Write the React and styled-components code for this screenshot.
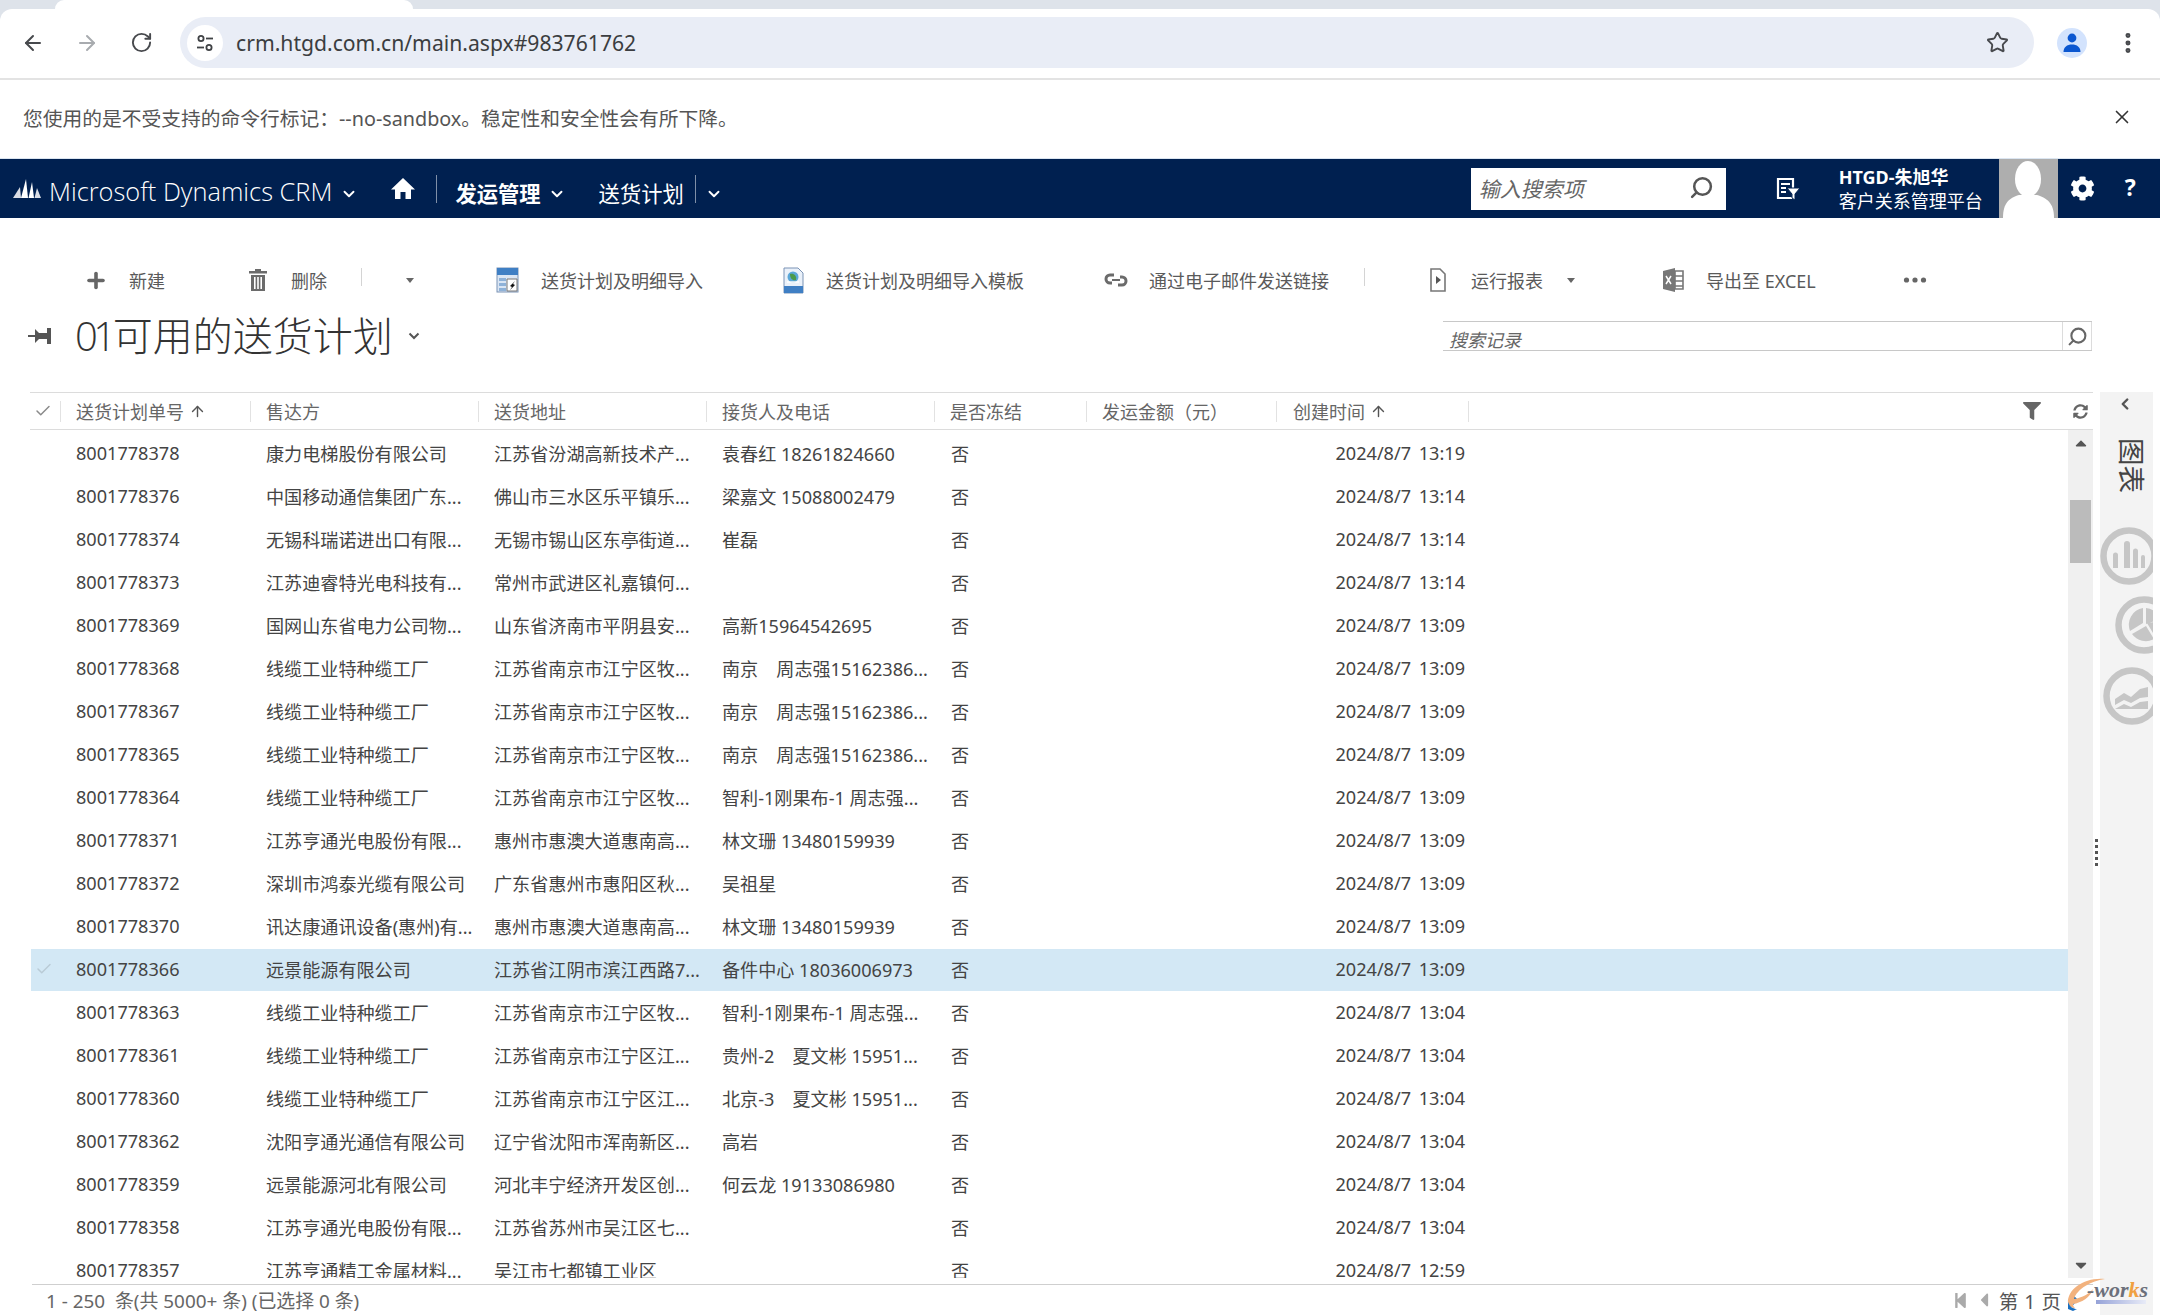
import React from 'react';
import styled, { createGlobalStyle } from 'styled-components';
import { ArrowLeft, ArrowRight, RotateCw, Star, X, EllipsisVertical, ChevronDown, ChevronLeft, ArrowUp, Check, Search, Plus } from 'lucide-react';
import { FaCog, FaFilter, FaSyncAlt, FaStepBackward, FaCaretLeft, FaCaretUp, FaCaretDown, FaCaretRight } from 'react-icons/fa';

const SANS = `"Noto Sans", "Noto Sans CJK SC", sans-serif`;

const Global = createGlobalStyle`
  html, body { margin: 0; padding: 0; background: #fff; }
  body { font-family: ${SANS}; color: #444; }
  * { box-sizing: border-box; }
`;

const Page = styled.div`
  width: 2160px;
  height: 1315px;
  overflow: hidden;
  display: flex;
  flex-direction: column;
  background: #fff;
`;

const BrowserFrame = styled.div`
  background: #dee3ea;
  flex: none;
`;
const TabStrip = styled.div`
  height: 9px;
  display: flex;
`;
const ActiveTab = styled.div`
  width: 358px;
  margin-left: 55px;
  background: #fff;
  border-radius: 10px 10px 0 0;
`;
const Toolbar = styled.div`
  height: 71px;
  background: #fff;
  border-radius: 12px 12px 0 0;
  border-bottom: 2px solid #e3e3e3;
  display: flex;
  align-items: center;
  padding-bottom: 2px;
  color: #47494d;
`;
const ToolButton = styled.div`
  width: 28px;
  display: flex;
  justify-content: center;
  margin-left: ${p => p.$ml || 0}px;
  color: ${p => p.$color || '#47494d'};
`;
const AddressBar = styled.div`
  width: 1854px;
  height: 51px;
  margin-left: 25px;
  border-radius: 26px;
  background: #e9edf6;
  display: flex;
  align-items: center;
  padding: 0 25px 0 7px;
`;
const SiteBadge = styled.div`
  width: 36px;
  height: 36px;
  border-radius: 50%;
  background: #fff;
  display: flex;
  align-items: center;
  justify-content: center;
`;
const UrlText = styled.div`
  flex: 1;
  margin-left: 13px;
  font-size: 21.15px;
  color: #3b3d40;
`;
const ProfileBadge = styled.div`
  width: 30px;
  height: 30px;
  margin-left: 23px;
  border-radius: 50%;
  background: #d3e3fd;
  display: flex;
  align-items: center;
  justify-content: center;
`;

const InfoBar = styled.div`
  height: 79px;
  flex: none;
  border-bottom: 1px solid #dbe5f0;
  display: flex;
  align-items: center;
  justify-content: space-between;
  padding: 0 27px 4px 23px;
  font-size: 19.75px;
  color: #555;
`;

const NavBar = styled.div`
  height: 59px;
  flex: none;
  background: #002050;
  color: #fff;
  display: flex;
  align-items: center;
`;
const Brand = styled.div`
  margin-left: 8px;
  padding-top: 5px;
  font-size: 25.4px;
  font-weight: 300;
  font-family: "Open Sans", ${SANS};
  white-space: nowrap;
`;
const NavChevron = styled(ChevronDown)`
  margin-left: ${p => p.$ml || 0}px;
  margin-top: 10px;
  flex: none;
`;
const NavDivider = styled.div`
  width: 1px;
  height: 28px;
  background: #7f8fa8;
  margin-left: ${p => p.$ml || 0}px;
`;
const NavLabel = styled.div`
  margin-left: ${p => p.$ml || 0}px;
  font-size: 21.3px;
  font-weight: ${p => (p.$bold ? 700 : 400)};
  padding-top: 7px;
  white-space: nowrap;
`;
const HelpMark = styled.div`
  margin-left: 30px;
  font-size: 23px;
  font-weight: 700;
  padding-bottom: 4px;
`;
const NavIconSlot = styled.div`
  margin-left: ${p => p.$ml || 0}px;
  display: flex;
  flex: none;
`;
const GlobalSearch = styled.div`
  width: 255px;
  height: 42px;
  margin-left: 748px;
  background: #fff;
  display: flex;
  align-items: center;
  justify-content: space-between;
  padding: 0 12px 2px 8px;
  font-size: 21px;
  font-style: italic;
  color: #666;
`;
const UserBlock = styled.div`
  margin-left: 38px;
  width: 160px;
  display: flex;
  flex-direction: column;
  line-height: 24px;
`;
const UserName = styled.div`
  font-size: 18px;
  font-weight: 700;
`;
const UserOrg = styled.div`
  font-size: 18px;
`;
const Avatar = styled.div`
  width: 59px;
  height: 59px;
  background: #aeaeae;
  flex: none;
  display: flex;
  overflow: hidden;
`;

const CommandBar = styled.div`
  height: 44px;
  margin-top: 40px;
  flex: none;
  display: flex;
  align-items: center;
  color: #5a5a5a;
  font-size: 18px;
  padding-left: 84px;
`;
const Command = styled.div`
  display: flex;
  align-items: center;
  gap: ${p => p.$gap ?? 21}px;
  margin-left: ${p => p.$ml || 0}px;
  white-space: nowrap;
`;
const CommandIcon = styled.div`
  width: 24px;
  height: 24px;
  display: flex;
  align-items: center;
  justify-content: center;
  flex: none;
`;
const CommandDivider = styled.div`
  width: 1px;
  height: 18px;
  background: #d4d4d4;
  margin-left: ${p => p.$ml || 0}px;
  margin-top: -6px;
`;
const Caret = styled.div`
  width: 0;
  height: 0;
  border-left: 4px solid transparent;
  border-right: 4px solid transparent;
  border-top: 5px solid #666;
  margin-left: ${p => p.$ml || 0}px;
`;

const TitleRow = styled.div`
  height: 36px;
  margin-top: 16px;
  flex: none;
  display: flex;
  align-items: center;
  padding: 0 68px 0 28px;
`;
const ViewTitle = styled.div`
  margin-left: 21px;
  font-size: 40px;
  color: #333;
  white-space: nowrap;
  line-height: 36px;
  font-weight: 300;
`;
const TitleDigits = styled.span`
  font-family: "Open Sans", ${SANS};
  letter-spacing: -4.5px;
  margin-right: 1px;
`;
const QuickSearch = styled.div`
  width: 649px;
  height: 30px;
  margin-left: auto;
  display: flex;
  border-top: 1px solid #c8c8c8;
  border-bottom: 1px solid #c8c8c8;
`;
const QuickInput = styled.div`
  flex: 1;
  padding: 5px 0 0 6px;
  font-size: 18px;
  line-height: 26px;
  font-style: italic;
  color: #666;
`;
const QuickButton = styled.div`
  width: 30px;
  border-left: 1px solid #dcdcdc;
  border-right: 1px solid #dcdcdc;
  display: flex;
  align-items: center;
  justify-content: center;
`;

const Content = styled.div`
  flex: 1;
  margin-top: 38px;
  min-height: 0;
  display: flex;
`;
const GridArea = styled.div`
  width: 2063px;
  margin-left: 30px;
  display: flex;
  flex-direction: column;
  position: relative;
`;
const HeaderRow = styled.div`
  height: 38px;
  flex: none;
  display: flex;
  align-items: center;
  border-top: 1px solid #dcdcdc;
  border-bottom: 1px solid #dcdcdc;
`;
const CheckCell = styled.div`
  width: 30px;
  flex: none;
  display: flex;
  justify-content: center;
  padding-right: 4px;
  color: ${p => p.$color || '#8a8a8a'};
`;
const HeaderCell = styled.div`
  width: ${p => p.$w}px;
  height: 21px;
  flex: none;
  border-left: 1px solid #e2e2e2;
  padding-left: ${p => p.$pl ?? 15}px;
  display: flex;
  align-items: center;
  gap: 5px;
  font-size: 18px;
  color: #666;
  white-space: nowrap;
`;
const HeaderEnd = styled.div`
  width: 1px;
  height: 21px;
  background: #e2e2e2;
`;
const HeaderTools = styled.div`
  margin-left: auto;
  display: flex;
  align-items: center;
  gap: 32px;
  padding-right: 5px;
  color: #666;
`;
const BodyArea = styled.div`
  height: 848px;
  flex: none;
  display: flex;
`;
const RowsViewport = styled.div`
  flex: 1;
  min-width: 0;
  overflow: hidden;
  padding-top: 3px;
`;
const Row = styled.div`
  height: 43px;
  display: flex;
  align-items: center;
  margin-left: 1px;
  border-bottom: 1px solid #fff;
  padding-bottom: 2px;
  background: ${p => (p.$selected ? '#d3e8f5' : 'transparent')};
  font-size: 18.1px;
  color: #444;
`;
const Cell = styled.div`
  width: ${p => p.$w}px;
  flex: none;
  padding-left: ${p => p.$pl ?? 15}px;
  white-space: pre;
`;
const DateCell = styled.div`
  width: ${p => p.$w}px;
  flex: none;
  text-align: right;
  padding-right: 4px;
  word-spacing: 3px;
  white-space: pre;
`;
const Scrollbar = styled.div`
  width: 25px;
  flex: none;
  background: #f0f0f0;
  display: flex;
  flex-direction: column;
  align-items: center;
  justify-content: space-between;
  padding: 4px 2px 4px;
  color: #555;
  position: relative;
`;
const ScrollThumb = styled.div`
  position: absolute;
  top: 70px;
  left: 2px;
  width: 21px;
  height: 63px;
  background: #bbb;
`;
const Grip = styled.div`
  position: absolute;
  top: 409px;
  left: 27px;
  width: 3px;
  height: 28px;
  background: repeating-linear-gradient(to bottom, #555 0 3px, transparent 3px 6px);
`;
const Footer = styled.div`
  margin-top: 6px;
  height: 31px;
  flex: none;
  border-top: 1px solid #cfcfcf;
  margin-left: 2px;
  display: flex;
  align-items: center;
  justify-content: space-between;
  padding-left: 14px;
  font-size: 18.9px;
  color: #666;
`;
const Pager = styled.div`
  display: flex;
  align-items: center;
  gap: 4px;
  padding-right: 8px;
  color: #aaa;
`;
const PageLabel = styled.span`
  color: #555;
  font-size: 19.5px;
  word-spacing: 1px;
`;
const ChartPanel = styled.div`
  width: 53px;
  margin-left: 7px;
  flex: none;
  background: #f3f3f3;
  overflow: hidden;
  display: flex;
  flex-direction: column;
`;
const PanelChevron = styled.div`
  height: 26px;
  padding: 3px 0 0 16px;
  color: #555;
`;
const PanelTitle = styled.div`
  margin: 20px 0 0 16px;
  width: 30px;
  writing-mode: vertical-rl;
  text-orientation: sideways;
  font-size: 27.5px;
  line-height: 30px;
  color: #444;
  height: 56px;
`;
const ChartIcon = styled.svg`
  width: 58px;
  height: 58px;
  flex: none;
  margin-left: ${p => p.$ml}px;
  margin-top: ${p => p.$mt}px;
`;

const Watermark = styled.div`
  position: absolute;
  left: 2035px;
  top: 885px;
  width: 92px;
  height: 34px;
`;
const WatermarkText = styled.span`
  position: absolute;
  left: 22px;
  top: 0;
  font-family: "Liberation Serif", serif;
  font-style: italic;
  font-weight: 700;
  font-size: 22px;
  line-height: 26px;
  color: #6b6f7a;
  white-space: nowrap;
`;
const WatermarkK = styled.span`
  color: #f0a040;
`;
const WatermarkBar = styled.div`
  position: absolute;
  left: 31px;
  top: 23px;
  width: 50px;
  height: 4px;
  background: linear-gradient(to right, #96a3d8, #e8ebf7);
`;
const WatermarkMark = styled.svg`
  position: absolute;
  left: 0;
  top: 0;
`;

const COLS = [190, 228, 228, 228, 152, 190, 192];
const HEAD = ['送货计划单号', '售达方', '送货地址', '接货人及电话', '是否冻结', '发运金额（元）', '创建时间'];

const NJ = ['线缆工业特种缆工厂', '江苏省南京市江宁区牧...'];
const ROWS = [
  ['8001778378', '康力电梯股份有限公司', '江苏省汾湖高新技术产...', '袁春红 18261824660', '13:19'],
  ['8001778376', '中国移动通信集团广东...', '佛山市三水区乐平镇乐...', '梁嘉文 15088002479', '13:14'],
  ['8001778374', '无锡科瑞诺进出口有限...', '无锡市锡山区东亭街道...', '崔磊', '13:14'],
  ['8001778373', '江苏迪睿特光电科技有...', '常州市武进区礼嘉镇何...', '', '13:14'],
  ['8001778369', '国网山东省电力公司物...', '山东省济南市平阴县安...', '高新15964542695', '13:09'],
  ['8001778368', ...NJ, '南京　周志强15162386...', '13:09'],
  ['8001778367', ...NJ, '南京　周志强15162386...', '13:09'],
  ['8001778365', ...NJ, '南京　周志强15162386...', '13:09'],
  ['8001778364', ...NJ, '智利-1刚果布-1 周志强...', '13:09'],
  ['8001778371', '江苏亨通光电股份有限...', '惠州市惠澳大道惠南高...', '林文珊 13480159939', '13:09'],
  ['8001778372', '深圳市鸿泰光缆有限公司', '广东省惠州市惠阳区秋...', '吴祖星', '13:09'],
  ['8001778370', '讯达康通讯设备(惠州)有...', '惠州市惠澳大道惠南高...', '林文珊 13480159939', '13:09'],
  ['8001778366', '远景能源有限公司', '江苏省江阴市滨江西路7...', '备件中心 18036006973', '13:09'],
  ['8001778363', ...NJ, '智利-1刚果布-1 周志强...', '13:04'],
  ['8001778361', '线缆工业特种缆工厂', '江苏省南京市江宁区江...', '贵州-2　夏文彬 15951...', '13:04'],
  ['8001778360', '线缆工业特种缆工厂', '江苏省南京市江宁区江...', '北京-3　夏文彬 15951...', '13:04'],
  ['8001778362', '沈阳亨通光通信有限公司', '辽宁省沈阳市浑南新区...', '高岩', '13:04'],
  ['8001778359', '远景能源河北有限公司', '河北丰宁经济开发区创...', '何云龙 19133086980', '13:04'],
  ['8001778358', '江苏亨通光电股份有限...', '江苏省苏州市吴江区七...', '', '13:04'],
  ['8001778357', '江苏亨通精工金属材料...', '吴江市七都镇工业区', '', '12:59'],
];

const SiteIcon = () => (
  <svg width="20" height="20" viewBox="0 0 20 20" fill="none" stroke="#3f4245" strokeWidth="1.8">
    <circle cx="6" cy="5.5" r="2.6" />
    <path d="M11 5.5h7" />
    <circle cx="14" cy="14.5" r="2.6" />
    <path d="M2 14.5h7" />
  </svg>
);
const PersonIcon = () => (
  <svg width="20" height="22" viewBox="0 0 20 22" fill="#0b57d0">
    <circle cx="10" cy="6" r="4.4" />
    <path d="M1.5 20c0-5 3.6-7.6 8.5-7.6s8.5 2.6 8.5 7.6z" />
  </svg>
);
const DynamicsLogo = () => (
  <svg width="28" height="24" viewBox="0 0 28 24" fill="#fff">
    <path d="M0 21 L7 10 L8 21z" opacity=".85" />
    <path d="M8 21 L13 2 L15 21z" />
    <path d="M15.5 21 L19 5 L21 21z" />
    <path d="M21.5 21 L24 11 L28 21z" opacity=".85" />
  </svg>
);
const HomeIcon = () => (
  <svg width="24" height="24" viewBox="0 0 24 24" fill="#fff">
    <path d="M12 1 L24 12.5 H20 V22 H14.5 V15 H9.5 V22 H4 V12.5 H0z" />
  </svg>
);
const AdvFindIcon = () => (
  <svg width="26" height="26" viewBox="0 0 26 26" fill="none">
    <path d="M3 3h15v19H3z" stroke="#fff" strokeWidth="2.2" />
    <path d="M6 8h9M6 12h5M6 16h5" stroke="#fff" strokeWidth="2" />
    <path d="M12 12h13l-5 6v6l-3-2v-4z" fill="#fff" stroke="#002050" strokeWidth="1" />
  </svg>
);
const SilhouetteIcon = () => (
  <svg width="59" height="59" viewBox="0 0 59 59" fill="#fff">
    <ellipse cx="29" cy="20" rx="13" ry="18" />
    <path d="M4 59c0-15 6-20 16-23h18c10 3 17 8 17 23z" />
  </svg>
);
const TrashIcon = () => (
  <svg width="20" height="24" viewBox="0 0 20 24" fill="#6b6b6b">
    <path d="M7 1h6v2h6v2.5H1V3h6z" />
    <path d="M3 7h14v16H3zM6 9v12h1.6V9zm3.2 0v12h1.6V9zm3.2 0v12H14V9z" fillRule="evenodd" />
  </svg>
);
const ImportIcon = () => (
  <svg width="24" height="26" viewBox="0 0 24 26">
    <rect x="1" y="1" width="21" height="24" fill="#dbe6f4" stroke="#7b93b5" />
    <rect x="1" y="1" width="21" height="7" fill="#3f7fc4" />
    <path d="M3 11h7v3H3zM3 16h7v3H3zM3 21h7v3H3z" fill="#8fb2d8" />
    <path d="M11 12h10v12H11z" fill="#fff" stroke="#777" />
    <path d="M19 14l-5 5 2 1-2 3 5-5-2-1z" fill="#111" />
  </svg>
);
const TemplateIcon = () => (
  <svg width="24" height="27" viewBox="0 0 24 27">
    <path d="M3 1h14l5 5v20H3z" fill="#eaf1fa" stroke="#7b93b5" />
    <path d="M3 19h19v7H3z" fill="#3f7fc4" />
    <circle cx="12" cy="10" r="5.5" fill="#5aa7d8" />
    <path d="M9 7c4-1 7 2 6 6-3 1-6-1-6-6z" fill="#4a9a4a" />
    <path d="M6 15h12" stroke="#ffffff" strokeWidth="1.4" />
  </svg>
);
const LinkIcon = () => (
  <svg width="24" height="18" viewBox="0 0 24 18" fill="none" stroke="#6b6b6b" strokeWidth="3">
    <path d="M10 4H6a4 4 0 0 0 0 8h2" />
    <path d="M14 14h4a4 4 0 0 0 0-8h-2" />
    <path d="M8 9h8" strokeWidth="2" />
  </svg>
);
const ReportIcon = () => (
  <svg width="18" height="24" viewBox="0 0 18 24" fill="none">
    <path d="M2 1h9l5 5v17H2z" stroke="#777" strokeWidth="1.6" fill="#fff" />
    <path d="M7 8l5 4-5 4z" fill="#555" />
  </svg>
);
const ExcelIcon = () => (
  <svg width="22" height="26" viewBox="0 0 22 26">
    <path d="M1 4l12-3v24L1 22z" fill="#777" />
    <path d="M13 4h8v18h-8z" fill="#fff" stroke="#777" strokeWidth="1.6" />
    <path d="M13 9h8M13 14h8M13 19h8" stroke="#777" strokeWidth="1.4" />
    <path d="M4 9l5 8M9 9l-5 8" stroke="#fff" strokeWidth="1.5" />
  </svg>
);
const PinIcon = () => (
  <svg width="26" height="20" viewBox="0 0 26 20" fill="#555">
    <path d="M0 9h7v2H0z" />
    <path d="M7 3l4 4h8V2h4v16h-4v-5h-8l-4 4z" />
  </svg>
);
const Dots = () => (
  <svg width="24" height="6" viewBox="0 0 24 6" fill="#666">
    <circle cx="3.5" cy="3" r="2.6" />
    <circle cx="12" cy="3" r="2.6" />
    <circle cx="20.5" cy="3" r="2.6" />
  </svg>
);
const ViewChevron = () => (
  <svg width="12" height="8" viewBox="0 0 12 8" fill="none" stroke="#555" strokeWidth="2">
    <path d="M1.5 1.5 6 6l4.5-4.5" />
  </svg>
);
const Ring = () => <circle cx="29" cy="29" r="25.5" fill="none" stroke="#c6c6c6" strokeWidth="6.5" />;

export default function App() {
  return (
    <Page>
      <Global />
      <BrowserFrame>
        <TabStrip><ActiveTab /></TabStrip>
        <Toolbar>
          <ToolButton $ml={19}><ArrowLeft size={24} strokeWidth={2} /></ToolButton>
          <ToolButton $ml={26} $color="#a8abaf"><ArrowRight size={24} strokeWidth={2} /></ToolButton>
          <ToolButton $ml={26}><RotateCw size={23} strokeWidth={2} /></ToolButton>
          <AddressBar>
            <SiteBadge><SiteIcon /></SiteBadge>
            <UrlText>crm.htgd.com.cn/main.aspx#983761762</UrlText>
            <Star size={23} strokeWidth={2} color="#47494d" />
          </AddressBar>
          <ProfileBadge><PersonIcon /></ProfileBadge>
          <ToolButton $ml={27}><EllipsisVertical size={26} strokeWidth={2.6} /></ToolButton>
        </Toolbar>
      </BrowserFrame>

      <InfoBar>
        <span>您使用的是不受支持的命令行标记：--no-sandbox。稳定性和安全性会有所下降。</span>
        <X size={22} strokeWidth={1.8} color="#333" />
      </InfoBar>

      <NavBar>
        <NavIconSlot $ml={13}><DynamicsLogo /></NavIconSlot>
        <Brand>Microsoft Dynamics CRM</Brand>
        <NavChevron size={18} strokeWidth={2.5} $ml={8} />
        <NavIconSlot $ml={33}><HomeIcon /></NavIconSlot>
        <NavDivider $ml={21} />
        <NavLabel $ml={18} $bold>发运管理</NavLabel>
        <NavChevron size={18} strokeWidth={2.5} $ml={7} />
        <NavLabel $ml={33}>送货计划</NavLabel>
        <NavDivider $ml={11} />
        <NavChevron size={18} strokeWidth={2.5} $ml={9} />
        <GlobalSearch>
          <span>输入搜索项</span>
          <Search size={25} strokeWidth={2.4} color="#555" transform="scale(-1,1)" />
        </GlobalSearch>
        <NavIconSlot $ml={49}><AdvFindIcon /></NavIconSlot>
        <UserBlock>
          <UserName>HTGD-朱旭华</UserName>
          <UserOrg>客户关系管理平台</UserOrg>
        </UserBlock>
        <Avatar><SilhouetteIcon /></Avatar>
        <NavIconSlot $ml={12}><FaCog size={25} /></NavIconSlot>
        <HelpMark>?</HelpMark>
      </NavBar>

      <CommandBar>
        <Command><CommandIcon><Plus size={25} strokeWidth={3.6} color="#666" /></CommandIcon><span>新建</span></Command>
        <Command $ml={81}><CommandIcon><TrashIcon /></CommandIcon><span>删除</span></Command>
        <CommandDivider $ml={34} />
        <Caret $ml={44} />
        <Command $ml={82}><CommandIcon><ImportIcon /></CommandIcon><span>送货计划及明细导入</span></Command>
        <Command $ml={78}><CommandIcon><TemplateIcon /></CommandIcon><span>送货计划及明细导入模板</span></Command>
        <Command $ml={80}><CommandIcon><LinkIcon /></CommandIcon><span>通过电子邮件发送链接</span></Command>
        <CommandDivider $ml={35} />
        <Command $ml={61}><CommandIcon><ReportIcon /></CommandIcon><span>运行报表</span></Command>
        <Caret $ml={24} />
        <Command $ml={86}><CommandIcon><ExcelIcon /></CommandIcon><span>导出至 EXCEL</span></Command>
        <Command $ml={87}><Dots /></Command>
      </CommandBar>

      <TitleRow>
        <PinIcon />
        <ViewTitle><TitleDigits>01</TitleDigits>可用的送货计划</ViewTitle>
        <NavIconSlot $ml={15}><ViewChevron /></NavIconSlot>
        <QuickSearch>
          <QuickInput>搜索记录</QuickInput>
          <QuickButton><Search size={21} strokeWidth={2.4} color="#666" transform="scale(-1,1)" /></QuickButton>
        </QuickSearch>
      </TitleRow>

      <Content>
        <GridArea>
          <HeaderRow>
            <CheckCell><Check size={18} strokeWidth={2} /></CheckCell>
            {HEAD.map((h, i) => (
              <HeaderCell key={h} $w={COLS[i]} $pl={i === 6 ? 16 : 15}>
                {h}
                {(i === 0 || i === 6) && <ArrowUp size={17} strokeWidth={2} color="#555" />}
              </HeaderCell>
            ))}
            <HeaderEnd />
            <HeaderTools>
              <FaFilter size={18} />
              <FaSyncAlt size={15} />
            </HeaderTools>
          </HeaderRow>
          <BodyArea>
            <RowsViewport>
              {ROWS.map(r => (
                <Row key={r[0]} $selected={r[0] === '8001778366'}>
                  <CheckCell $color="#b9cbd6">{r[0] === '8001778366' && <Check size={18} strokeWidth={2} />}</CheckCell>
                  <Cell $w={COLS[0]} $pl={15}>{r[0]}</Cell>
                  <Cell $w={COLS[1]} $pl={15}>{r[1]}</Cell>
                  <Cell $w={COLS[2]} $pl={15}>{r[2]}</Cell>
                  <Cell $w={COLS[3]} $pl={15}>{r[3]}</Cell>
                  <Cell $w={COLS[4] + COLS[5]} $pl={16}>否</Cell>
                  <DateCell $w={COLS[6]}>2024/8/7 {r[4]}</DateCell>
                </Row>
              ))}
            </RowsViewport>
            <Scrollbar>
              <FaCaretUp size={18} />
              <ScrollThumb />
              <Grip />
              <FaCaretDown size={18} />
            </Scrollbar>
          </BodyArea>
          <Footer>
            <span>1 - 250&nbsp; 条(共 5000+ 条) (已选择 0 条)</span>
            <Pager>
              <FaStepBackward size={17} />
              <FaCaretLeft size={22} />
              <PageLabel>第 1 页</PageLabel>
              <FaCaretRight size={20} color="#1a6fc0" />
            </Pager>
          </Footer>
          <Watermark>
            <WatermarkMark width="42" height="34" viewBox="0 0 42 34">
              <path d="M3 26C2 12 20 0 40 2 26 4 12 12 9 22c8-1 16-6 19-10-2 8-12 14-20 15 0 2 1 3 2 4-3 0-6-2-7-5z" fill="#f2b27e" />
              <path d="M3 25c2 5 5 7 9 7l-4 2-5-2z" fill="#1a6fc0" />
            </WatermarkMark>
            <WatermarkText>-wor<WatermarkK>k</WatermarkK>s</WatermarkText>
            <WatermarkBar />
          </Watermark>
        </GridArea>
        <ChartPanel>
          <PanelChevron><ChevronLeft size={18} strokeWidth={3.2} /></PanelChevron>
          <PanelTitle>图表</PanelTitle>
          <ChartIcon $ml={0} $mt={33} viewBox="0 0 58 58">
            <Ring />
            <path d="M13 28a2.5 2.5 0 0 1 5 0v13h-5zM24 17a3 3 0 0 1 6 0v24h-6zM33 24a2.5 2.5 0 0 1 5 0v17h-5zM41 30a2 2 0 0 1 4 0v11h-4z" fill="#c6c6c6" />
          </ChartIcon>
          <ChartIcon $ml={15} $mt={11} viewBox="0 0 58 58">
            <Ring />
            <path d="M28 12v15L15 35a17 17 0 0 1 13-23zM31 12a17 17 0 0 1 14 11l-14 5zM17 38l14-8 8 13a17 17 0 0 1-22-5zM32 27l14-2a17 17 0 0 1-5 17z" fill="#c6c6c6" />
          </ChartIcon>
          <ChartIcon $ml={3} $mt={13} viewBox="0 0 58 58">
            <Ring />
            <path d="M12 32l9-6 7 4 9-8 8-2v10l-8 1-9 5-7-3-9 5zM12 42l9-5 7 3 9-5 8-1v8H12z" fill="#c6c6c6" />
          </ChartIcon>
        </ChartPanel>
      </Content>
    </Page>
  );
}
